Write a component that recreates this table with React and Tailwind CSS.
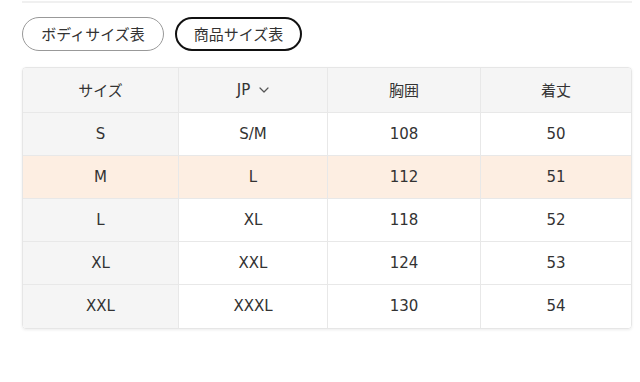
const rows = [
  ["S", "S/M", "108", "50"],
  ["M", "L", "112", "51"],
  ["L", "XL", "118", "52"],
  ["XL", "XXL", "124", "53"],
  ["XXL", "XXXL", "130", "54"],
];

const highlight = "M";

const ChevronDown = () => (
  <svg width="10" height="6" viewBox="0 0 10 6" fill="none" className="ml-[9px]">
    <path d="M1 1l4 4 4-4" stroke="#555" strokeWidth="1.2" strokeLinecap="round" strokeLinejoin="round" />
  </svg>
);

const jp = { fontFamily: '"Noto Sans CJK JP", sans-serif' };

export default function App() {
  return (
    <div
      className="w-[640px] h-[382px] bg-white text-[#333] text-[15px]"
      style={{ fontFamily: '"DejaVu Sans", "Noto Sans CJK JP", sans-serif' }}
    >
      <div className="pl-[22px] pr-[8px] pt-[1px]">
        <div className="h-[2px] bg-[#f0f0f0]" />
      </div>

      <div className="px-[22px] pt-[14px] flex gap-[11px]">
        <button
          type="button"
          className="h-[34px] w-[142px] rounded-full border border-[#999] bg-white text-[#333] text-[15px] flex items-center justify-center"
          style={jp}
        >
          ボディサイズ表
        </button>
        <button
          type="button"
          className="h-[34px] w-[127px] rounded-full border-2 border-[#111] bg-white text-[#333] text-[15px] flex items-center justify-center"
          style={jp}
        >
          商品サイズ表
        </button>
      </div>

      <div className="pl-[22px] pr-[8px] pt-[16px]">
        <div className="rounded-[4px] border border-[#e6e6e6] shadow-[0_1px_3px_rgba(0,0,0,0.08)] overflow-hidden">
          <div className="grid grid-cols-[155px_149px_153px_1fr] h-[45px] bg-[#f5f5f5] border-b border-[#e8e8e8]">
            <div className="flex items-center justify-center" style={jp}>
              サイズ
            </div>
            <div className="flex items-center justify-center border-l border-[#e8e8e8]">
              JP
              <ChevronDown />
            </div>
            <div className="flex items-center justify-center border-l border-[#e8e8e8]" style={jp}>
              胸囲
            </div>
            <div className="flex items-center justify-center border-l border-[#e8e8e8]" style={jp}>
              着丈
            </div>
          </div>
          {rows.map((row, i) => {
            const isHi = row[0] === highlight;
            return (
              <div
                key={row[0]}
                className={`grid grid-cols-[155px_149px_153px_1fr] h-[43px] ${
                  i < rows.length - 1 ? "border-b border-[#e8e8e8]" : ""
                } ${isHi ? "bg-[#fdeee2]" : "bg-white"}`}
              >
                {row.map((cell, j) => (
                  <div
                    key={j}
                    className={`flex items-center justify-center ${j > 0 ? "border-l border-[#e8e8e8]" : ""} ${
                      j === 0 && !isHi ? "bg-[#f5f5f5]" : ""
                    }`}
                  >
                    {cell}
                  </div>
                ))}
              </div>
            );
          })}
        </div>
      </div>
    </div>
  );
}
